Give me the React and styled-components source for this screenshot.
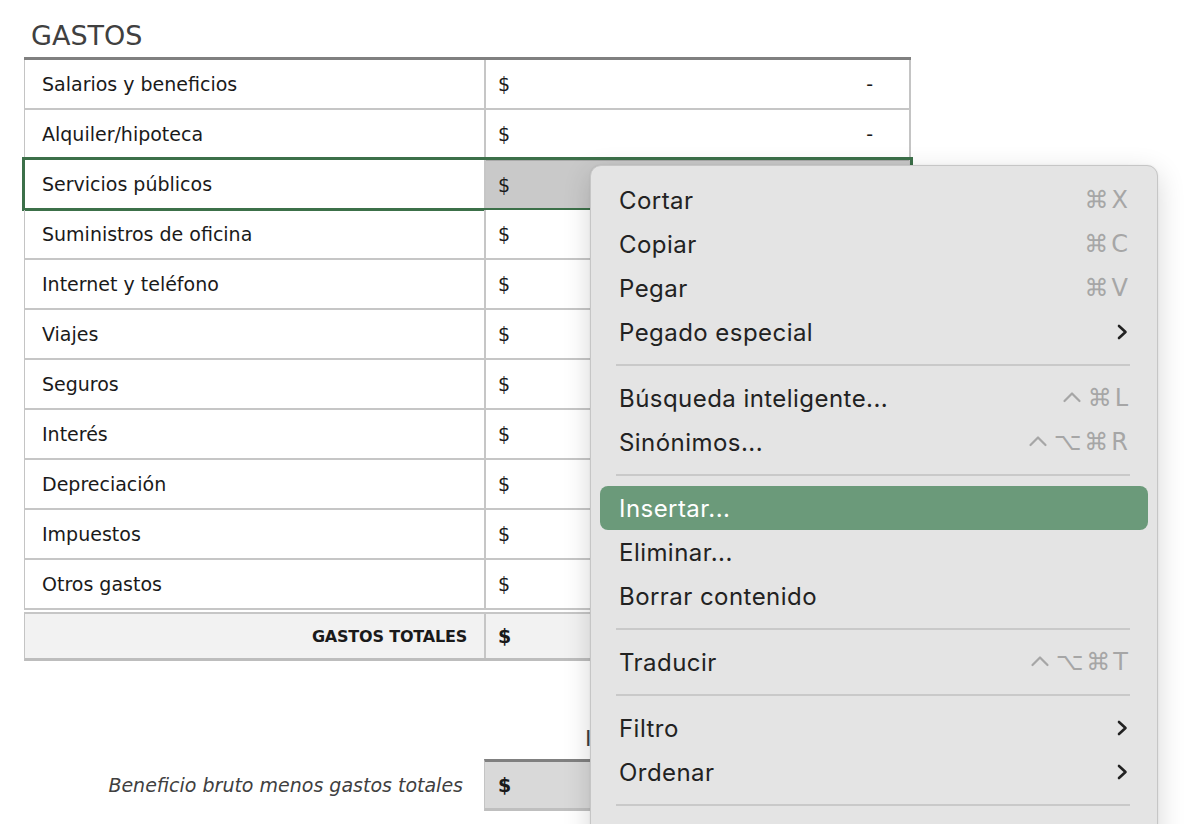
import React from "react";
import styled, { createGlobalStyle } from "styled-components";

const GlobalStyle = createGlobalStyle`
  html, body {
    margin: 0;
    padding: 0;
    background: #ffffff;
    overflow: hidden;
  }
  body {
    font-family: "DejaVu Sans", "Liberation Sans", sans-serif;
  }
`;

const gastos = [
  { label: "Salarios y beneficios", value: "-" },
  { label: "Alquiler/hipoteca", value: "-" },
  { label: "Servicios públicos", value: "", selected: true },
  { label: "Suministros de oficina", value: "" },
  { label: "Internet y teléfono", value: "" },
  { label: "Viajes", value: "" },
  { label: "Seguros", value: "" },
  { label: "Interés", value: "" },
  { label: "Depreciación", value: "" },
  { label: "Impuestos", value: "" },
  { label: "Otros gastos", value: "" },
];

const menu = [
  { label: "Cortar", keys: "⌘X" },
  { label: "Copiar", keys: "⌘C" },
  { label: "Pegar", keys: "⌘V" },
  { label: "Pegado especial", sub: true },
  { sep: true },
  { label: "Búsqueda inteligente...", keys: "⌘L", ctrl: true },
  { label: "Sinónimos...", keys: "⌥⌘R", ctrl: true },
  { sep: true },
  { label: "Insertar...", active: true },
  { label: "Eliminar..." },
  { label: "Borrar contenido" },
  { sep: true },
  { label: "Traducir", keys: "⌥⌘T", ctrl: true },
  { sep: true },
  { label: "Filtro", sub: true },
  { label: "Ordenar", sub: true },
  { sep: true },
];

const Chevron = () => (
  <svg width="12" height="18" viewBox="0 0 12 18">
    <path
      d="M3 3 L9.5 9 L3 15"
      fill="none"
      stroke="#222"
      strokeWidth="2.6"
      strokeLinecap="round"
      strokeLinejoin="round"
    />
  </svg>
);

const CtrlMark = () => (
  <CaretSvg width="20" height="14" viewBox="0 0 20 14">
    <path
      d="M2.5 11 L10 3.5 L17.5 11"
      fill="none"
      stroke="#a6a6a6"
      strokeWidth="2.2"
      strokeLinecap="round"
      strokeLinejoin="round"
    />
  </CaretSvg>
);

export default function App() {
  return (
    <Page>
      <GlobalStyle />
      <Title>GASTOS</Title>
      <Table>
        {gastos.map((g) => (
          <Row key={g.label} $selected={g.selected}>
            <Label>{g.label}</Label>
            <Value $selected={g.selected}>
              <span>$</span>
              <span>{g.value}</span>
            </Value>
          </Row>
        ))}
        <TotalRow>
          <TotalLabel>GASTOS TOTALES</TotalLabel>
          <TotalValue>$</TotalValue>
        </TotalRow>
      </Table>

      <Net>
        <NetHeading>
          <span />
          <NetTitle>I</NetTitle>
        </NetHeading>
        <NetRow>
          <NetLabel>Beneficio bruto menos gastos totales</NetLabel>
          <NetValue>$</NetValue>
        </NetRow>
      </Net>

      <Menu>
        {menu.map((m, i) =>
          m.sep ? (
            <Separator key={i} />
          ) : (
            <Item key={i} $active={m.active}>
              <span>{m.label}</span>
              {m.keys && (
                <Keys>
                  {m.ctrl && <CtrlMark />}
                  {m.keys}
                </Keys>
              )}
              {m.sub && <Chevron />}
            </Item>
          )
        )}
      </Menu>
    </Page>
  );
}

const Page = styled.div`
  position: relative;
  width: 1184px;
  height: 824px;
  padding: 17px 0 0 24px;
  box-sizing: border-box;
  color: #1a1a1a;
`;

const Title = styled.h1`
  margin: 0 0 0 7px;
  font-family: "DejaVu Sans", sans-serif;
  font-weight: 400;
  font-size: 27px;
  line-height: 38px;
  color: #404040;
  height: 40px;
`;

const Table = styled.div`
  width: 887px;
  border-top: 3px solid #808080;
`;

const Row = styled.div`
  position: relative;
  display: grid;
  grid-template-columns: 461px 1fr;
  height: 50px;
  box-sizing: border-box;
  border-left: 1px solid #c4c4c4;
  border-right: 2px solid #c4c4c4;
  border-bottom: 2px solid #c6c6c6;
  font-size: 19px;

  ${(p) =>
    p.$selected &&
    `
    &::after {
      content: "";
      position: absolute;
      left: -3px;
      right: -4px;
      top: -3px;
      bottom: -3px;
      border: 3px solid #3c7049;
      pointer-events: none;
    }
  `}
`;

const Label = styled.div`
  display: flex;
  align-items: center;
  padding-left: 17px;
  border-right: 2px solid #c6c6c6;
`;

const Value = styled.div`
  display: flex;
  align-items: center;
  justify-content: space-between;
  padding: 0 36px 0 12px;
  background: ${(p) => (p.$selected ? "#c9c9c9" : "#ffffff")};
  border-top: ${(p) => (p.$selected ? "1px solid #a9a9a9" : "none")};
`;

const TotalRow = styled.div`
  display: grid;
  grid-template-columns: 461px 1fr;
  height: 49px;
  box-sizing: border-box;
  margin-top: 2px;
  background: #f2f2f2;
  border-top: 2px solid #c6c6c6;
  border-left: 1px solid #c4c4c4;
  border-right: 2px solid #c4c4c4;
  border-bottom: 3px solid #bdbdbd;
  font-weight: 700;
`;

const TotalLabel = styled.div`
  display: flex;
  align-items: center;
  justify-content: flex-end;
  padding-right: 17px;
  border-right: 2px solid #c6c6c6;
  font-size: 16px;
  letter-spacing: -0.2px;
`;

const TotalValue = styled.div`
  display: flex;
  align-items: center;
  padding-left: 12px;
  font-size: 19px;
`;

const Net = styled.div`
  width: 887px;
  margin-top: 56px;
`;

const NetHeading = styled.div`
  display: grid;
  grid-template-columns: 461px 1fr;
  height: 42px;
  align-items: center;
`;

const NetTitle = styled.div`
  padding-left: 100px;
  font-size: 22px;
  color: #404040;
`;

const NetRow = styled.div`
  display: grid;
  grid-template-columns: 460px 1fr;
  height: 52px;
`;

const NetLabel = styled.div`
  display: flex;
  align-items: center;
  justify-content: flex-end;
  padding-right: 21px;
  font-style: italic;
  font-size: 19px;
  color: #404040;
`;

const NetValue = styled.div`
  display: flex;
  align-items: center;
  padding-left: 13px;
  background: #d9d9d9;
  border-top: 3px solid #808080;
  border-bottom: 3px solid #bfbfbf;
  border-left: 1px solid #c4c4c4;
  font-size: 19px;
  font-weight: 700;
`;

const Menu = styled.div`
  position: absolute;
  left: 590px;
  top: 165px;
  width: 568px;
  height: 720px;
  box-sizing: border-box;
  padding: 12px 9px;
  background: #e4e4e4;
  border: 1px solid #c6c6c6;
  border-radius: 11px;
  box-shadow: 0 8px 28px rgba(0, 0, 0, 0.16), 0 0 2px rgba(0, 0, 0, 0.08);
  font-family: "Inter", "Liberation Sans", sans-serif;
  color: #222222;
`;

const Item = styled.div`
  display: flex;
  align-items: center;
  justify-content: space-between;
  height: 44px;
  padding: 0 20px 0 19px;
  border-radius: 8px;
  font-size: 24px;
  letter-spacing: 0.45px;
  background: ${(p) => (p.$active ? "#6b9a7a" : "transparent")};
  color: ${(p) => (p.$active ? "#ffffff" : "#222222")};
`;

const Keys = styled.span`
  display: flex;
  align-items: center;
  font-family: "DejaVu Sans", sans-serif;
  font-size: 24px;
  letter-spacing: 3px;
  margin-right: -3px;
  color: #a6a6a6;
`;

const CaretSvg = styled.svg`
  margin: -3px 6px 0 0;
`;

const Separator = styled.div`
  height: 2px;
  margin: 10px 18px 10px 16px;
  background: #c9c9c9;
`;
